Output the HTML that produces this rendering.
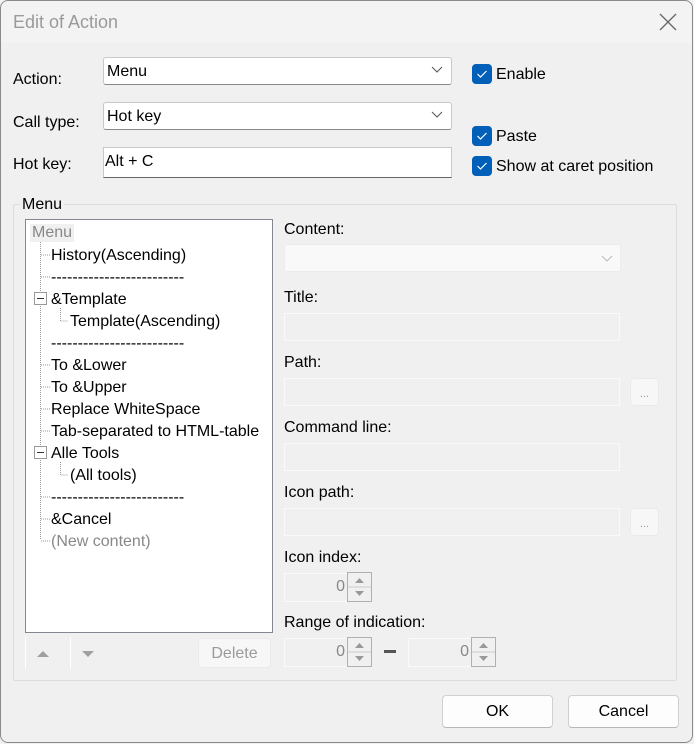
<!DOCTYPE html>
<html><head><style>
*{box-sizing:border-box;margin:0;padding:0}
body{width:694px;height:744px;background:#f0f0f0;font-family:"Liberation Sans",Arial,sans-serif;font-size:16px;color:#000;overflow:hidden;position:relative}
.win{position:absolute;left:0;top:0;width:694px;height:744px;background:#f0f0f0;overflow:hidden}
.frame{position:absolute;left:0;top:0;width:693px;height:743px;border:1px solid #8a8a8a;border-radius:8px;z-index:10;pointer-events:none}
.tb{position:absolute;left:0;top:0;width:100%;height:43px;background:#f3f3f3}
.a{position:absolute;white-space:nowrap}
.combo{position:absolute;background:#fff;border:1px solid #c8c8c8;border-bottom-color:#888;border-radius:3px;padding:5px 3px 0}
.edit{position:absolute;background:#fff;border:1px solid #c8c8c8;border-bottom-color:#666;padding:4px 1px}
.dis{position:absolute;border:1px solid #fafafa;background:#f0f0f0}
.chev{position:absolute;right:8px;top:8px}
.cb{position:absolute;width:20px;height:20px;background:#005fb8;border-radius:4px}
.btn{position:absolute;border:1px solid #d0d0d0;border-bottom-color:#b8b8b8;background:#fdfdfd;border-radius:4px;text-align:center}
.dbtn{position:absolute;background:#f7f7f7;border:1px solid #eaeaea;border-radius:4px;color:#9a9a9a;text-align:center;font-size:11px}
.spin{position:absolute;width:25px;height:30px;border:1px solid #b0b0b0;background:#f0f0f0}
.tree{position:absolute;left:25px;top:219px;width:248px;height:414px;background:#fff;border:1px solid #828790}
.ti{position:absolute;white-space:nowrap;line-height:18px;margin-top:1px}
</style></head><body>
<div class="win">
<div class="tb"></div>
<div class="a" style="left:13px;top:12px;font-size:18px;color:#9a9a9a">Edit of Action</div>
<svg class="a" style="left:659px;top:13px" width="18" height="18"><path d="M1 1L17 17M17 1L1 17" stroke="#666" stroke-width="1.3"/></svg>

<div class="a" style="left:13px;top:71px">Action:</div>
<div class="a" style="left:13px;top:114px">Call type:</div>
<div class="a" style="left:13px;top:156px">Hot key:</div>
<div class="combo" style="left:103px;top:57px;width:349px;height:28px">Menu<svg class="chev" width="12" height="8"><path d="M1 1L6 6L11 1" stroke="#555" fill="none"/></svg></div>
<div class="combo" style="left:103px;top:102px;width:349px;height:28px">Hot key<svg class="chev" width="12" height="8"><path d="M1 1L6 6L11 1" stroke="#555" fill="none"/></svg></div>
<div class="edit" style="left:103px;top:147px;width:349px;height:31px;padding-top:5px">Alt + C</div>

<div class="cb" style="left:472px;top:64px"></div>
<svg class="a" style="left:476px;top:69px" width="12" height="10"><path d="M1.5 5L4.5 8L10.5 2" stroke="#fff" fill="none" stroke-width="1.2"/></svg>
<div class="a" style="left:496px;top:66px">Enable</div>
<div class="cb" style="left:472px;top:126px"></div>
<svg class="a" style="left:476px;top:131px" width="12" height="10"><path d="M1.5 5L4.5 8L10.5 2" stroke="#fff" fill="none" stroke-width="1.2"/></svg>
<div class="a" style="left:496px;top:128px">Paste</div>
<div class="cb" style="left:472px;top:156px"></div>
<svg class="a" style="left:476px;top:161px" width="12" height="10"><path d="M1.5 5L4.5 8L10.5 2" stroke="#fff" fill="none" stroke-width="1.2"/></svg>
<div class="a" style="left:496px;top:158px">Show at caret position</div>

<div class="a" style="left:13px;top:204px;width:664px;height:477px;border:1px solid #dcdcdc;border-radius:2px"></div>
<div class="a" style="left:20px;top:196px;background:#f0f0f0;padding:0 2px">Menu</div>

<div class="tree">
<svg class="a" style="left:0;top:0" width="246" height="330">
<g stroke="#999" stroke-dasharray="1 1" fill="none">
<path d="M14.5 22V320"/>
<path d="M15 35H24M15 57H24M15 145H24M15 167H24M15 189H24M15 211H24M15 277H24M15 299H24M15 321H24"/>
<path d="M34.5 88V101H42M34.5 242V255H42"/>
</g>
<g fill="#fff" stroke="#999"><rect x="8.5" y="72.5" width="12" height="12"/><rect x="8.5" y="226.5" width="12" height="12"/></g>
<path d="M11 78.5H18M11 232.5H18" stroke="#333"/>
</svg>
<div class="ti" style="left:4px;top:3px;background:#f0f0f0;color:#888;padding:0 2px">Menu</div>
<div class="ti" style="left:25px;top:26px">History(Ascending)</div>
<div class="ti" style="left:25px;top:48px">-------------------------</div>
<div class="ti" style="left:25px;top:70px">&amp;Template</div>
<div class="ti" style="left:44px;top:92px">Template(Ascending)</div>
<div class="ti" style="left:25px;top:114px">-------------------------</div>
<div class="ti" style="left:25px;top:136px">To &amp;Lower</div>
<div class="ti" style="left:25px;top:158px">To &amp;Upper</div>
<div class="ti" style="left:25px;top:180px">Replace WhiteSpace</div>
<div class="ti" style="left:25px;top:202px">Tab-separated to HTML-table</div>
<div class="ti" style="left:25px;top:224px">Alle Tools</div>
<div class="ti" style="left:44px;top:246px">(All tools)</div>
<div class="ti" style="left:25px;top:268px">-------------------------</div>
<div class="ti" style="left:25px;top:290px">&amp;Cancel</div>
<div class="ti" style="left:25px;top:312px;color:#888">(New content)</div>
</div>

<div class="a" style="left:25px;top:637px;width:1px;height:32px;background:#fff"></div>
<div class="a" style="left:70px;top:637px;width:1px;height:32px;background:#fff"></div>
<svg class="a" style="left:36px;top:649px" width="14" height="10"><path d="M1 8L7 2L13 8Z" fill="#a0a0a0"/></svg>
<svg class="a" style="left:81px;top:649px" width="14" height="10"><path d="M1 2L7 8L13 2Z" fill="#a0a0a0"/></svg>
<div class="dbtn" style="left:198px;top:638px;width:73px;height:30px;font-size:16px;line-height:29px">Delete</div>

<div class="a" style="left:284px;top:221px">Content:</div>
<div class="a" style="left:284px;top:244px;width:337px;height:28px;background:#f9f9f9;border:1px solid #ececec;border-radius:3px"><svg class="chev" style="top:10px;right:7px" width="12" height="8"><path d="M1 1L6 6L11 1" stroke="#bbb" fill="none"/></svg></div>
<div class="a" style="left:284px;top:289px">Title:</div>
<div class="dis" style="left:284px;top:313px;width:336px;height:28px"></div>
<div class="a" style="left:284px;top:354px">Path:</div>
<div class="dis" style="left:284px;top:378px;width:336px;height:28px"></div>
<div class="dbtn" style="left:630px;top:378px;width:29px;height:28px;line-height:30px">...</div>
<div class="a" style="left:284px;top:419px">Command line:</div>
<div class="dis" style="left:284px;top:443px;width:336px;height:28px"></div>
<div class="a" style="left:284px;top:484px">Icon path:</div>
<div class="dis" style="left:284px;top:508px;width:336px;height:28px"></div>
<div class="dbtn" style="left:630px;top:508px;width:29px;height:28px;line-height:30px">...</div>
<div class="a" style="left:284px;top:549px">Icon index:</div>
<div class="dis" style="left:284px;top:573px;width:64px;height:29px;text-align:right;color:#888;padding:4px 2px">0</div>
<div class="spin" style="left:347px;top:572px"><svg width="23" height="28"><path d="M0 14H23" stroke="#ccc"/><path d="M7 10L11.5 5L16 10Z M7 18L11.5 23L16 18Z" fill="#999"/></svg></div>
<div class="a" style="left:284px;top:614px">Range of indication:</div>
<div class="dis" style="left:284px;top:638px;width:64px;height:29px;text-align:right;color:#888;padding:4px 2px">0</div>
<div class="spin" style="left:347px;top:637px"><svg width="23" height="28"><path d="M0 14H23" stroke="#ccc"/><path d="M7 10L11.5 5L16 10Z M7 18L11.5 23L16 18Z" fill="#999"/></svg></div>
<div class="a" style="left:384px;top:650px;width:12px;height:3px;background:#555"></div>
<div class="dis" style="left:408px;top:638px;width:64px;height:29px;text-align:right;color:#888;padding:4px 2px">0</div>
<div class="spin" style="left:471px;top:637px"><svg width="23" height="28"><path d="M0 14H23" stroke="#ccc"/><path d="M7 10L11.5 5L16 10Z M7 18L11.5 23L16 18Z" fill="#999"/></svg></div>

<div class="btn" style="left:442px;top:695px;width:111px;height:33px;line-height:32px">OK</div>
<div class="btn" style="left:568px;top:695px;width:111px;height:33px;line-height:32px">Cancel</div>
<div class="frame"></div>
</div>
</body></html>
